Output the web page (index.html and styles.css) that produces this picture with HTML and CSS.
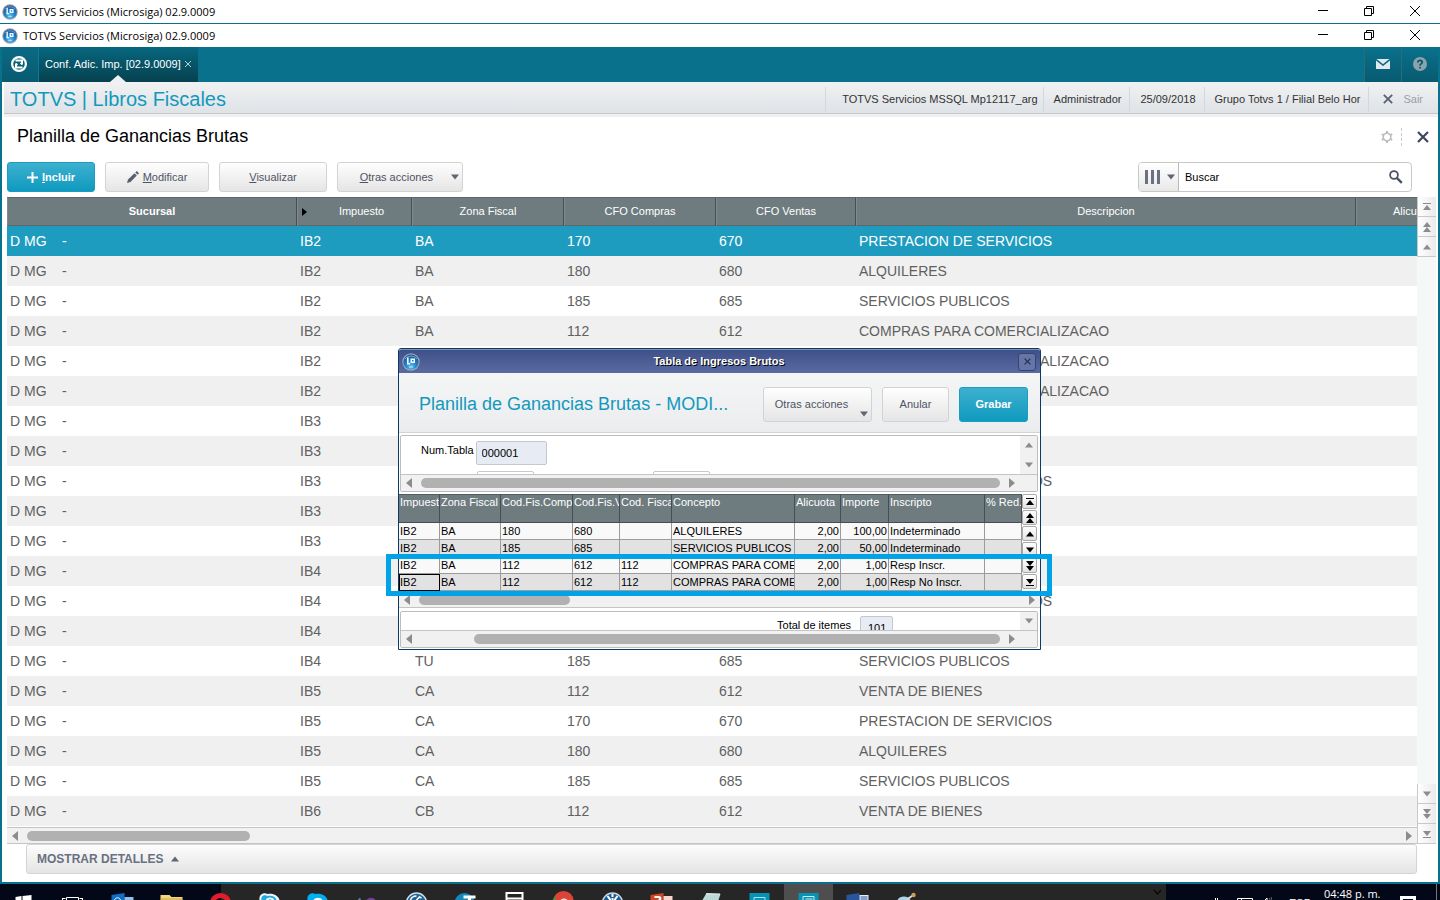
FILE: index.html
```html
<!DOCTYPE html>
<html lang="es">
<head>
<meta charset="utf-8">
<title>TOTVS Servicios (Microsiga) 02.9.0009</title>
<link rel="stylesheet" href="styles.css">
</head>
<body>
<svg class="defs" width="0" height="0" aria-hidden="true">
  <defs>
    <radialGradient id="ball" cx="50%" cy="80%" r="80%"><stop offset="0" stop-color="#5cc8f5"/><stop offset=".45" stop-color="#2380c8"/><stop offset="1" stop-color="#1a4f94"/></radialGradient>
    <symbol id="logo" viewBox="0 0 18 18"><circle cx="9" cy="9" r="8.700" fill="#9aa7b0"/><circle cx="9" cy="9" r="7.600" fill="url(#ball)"/><path d="M3 6a7 6 0 0 1 12 0" fill="none" stroke="#a9d3ee" stroke-width="1" opacity=".6"/><path d="M5 4.500h1.600V10H8v1.500H5zM8.500 5.500h4.500V10H8.500zM10 7v1.500h1.500V7z" fill="#f2faff" fill-rule="evenodd"/><path d="M7 14h4" stroke="#bdeafc"/></symbol>
    <symbol id="wmin" viewBox="0 0 12 12"><path d="M1 5.500h10" stroke="#000" fill="none"/></symbol>
    <symbol id="wmax" viewBox="0 0 12 12"><path d="M1.500 3.500h7v7h-7zM3.500 3.500v-2h7v7h-2" stroke="#000" fill="none"/></symbol>
    <symbol id="wx" viewBox="0 0 12 12"><path d="M1 1l10 10M11 1L1 11" stroke="#000" fill="none"/></symbol>
    <symbol id="up" viewBox="0 0 12 12"><path d="M6 3.500l4 5H2z"/></symbol>
    <symbol id="down" viewBox="0 0 12 12"><path d="M6 8.500l4-5H2z"/></symbol>
    <symbol id="left" viewBox="0 0 12 12"><path d="M3 6l6-5v10z"/></symbol>
    <symbol id="right" viewBox="0 0 12 12"><path d="M9 6L3 1v10z"/></symbol>
    <symbol id="first" viewBox="0 0 12 12"><path d="M2 2h8v1H2zM6 4l4 5H2z"/></symbol>
    <symbol id="last" viewBox="0 0 12 12"><path d="M2 9h8v1H2zM6 8l4-5H2z"/></symbol>
    <symbol id="up2" viewBox="0 0 12 12"><path d="M6 1l4 5H2zM6 6l4 5H2z"/></symbol>
    <symbol id="down2" viewBox="0 0 12 12"><path d="M6 6l4-5H2zM6 11l4-5H2z"/></symbol>
    <symbol id="cross" viewBox="0 0 12 12"><path d="M1 1l10 10M11 1L1 11" fill="none" stroke="currentColor" stroke-width="2.200"/></symbol>
  </defs>
</svg>

<header class="titlebar">
  <svg class="i16"><use href="#logo"/></svg><span class="titlebar-text">TOTVS Servicios (Microsiga) 02.9.0009</span>
  <button aria-label="Minimizar"><svg class="i12"><use href="#wmin"/></svg></button><button aria-label="Restaurar"><svg class="i12"><use href="#wmax"/></svg></button><button aria-label="Cerrar"><svg class="i12"><use href="#wx"/></svg></button>
</header>
<header class="titlebar">
  <svg class="i16"><use href="#logo"/></svg><span class="titlebar-text">TOTVS Servicios (Microsiga) 02.9.0009</span>
  <button aria-label="Minimizar"><svg class="i12"><use href="#wmin"/></svg></button><button aria-label="Restaurar"><svg class="i12"><use href="#wmax"/></svg></button><button aria-label="Cerrar"><svg class="i12"><use href="#wx"/></svg></button>
</header>

<main class="frame">
  <nav class="tabs">
    <button class="home" aria-label="Inicio"><svg width="16" height="16" viewBox="0 0 16 16"><circle cx="8" cy="8" r="6.900" fill="none" stroke="#fff" stroke-width="2.200"/><path d="M4.500 4.500h6.500v4M11.500 11.500H5v-4" fill="none" stroke="#fff" stroke-width="2"/><path d="M5 7.500l1.500 1.500M11 8.500L9.500 7" stroke="#fff" stroke-width="1.500"/></svg></button>
    <div class="tab"><span>Conf. Adic. Imp. [02.9.0009]</span><button aria-label="Cerrar pestaña"><svg width="6" height="6" viewBox="0 0 6 6"><path d="M0 0l6 6M6 0L0 6" stroke="#b9d3da" fill="none"/></svg></button></div>
    <div class="grow"></div>
    <button class="tool" aria-label="Mensajes"><svg width="14" height="10" viewBox="0 0 14 10"><path d="M0 0h14v10H0z" fill="#dfe9ee"/><path d="M0 .5l7 5.500 7-5.500" fill="none" stroke="#0a6680" stroke-width="1.500"/></svg></button>
    <button class="tool" aria-label="Ayuda"><svg width="14" height="14" viewBox="0 0 14 14"><circle cx="7" cy="7" r="7" fill="#8ba3ad"/><path d="M4.800 5.500c0-3 4.400-2.700 4.400-.2C9.200 7 7 6.700 7 8.500M7 9.700v1.800" fill="none" stroke="#0a5468" stroke-width="1.700"/></svg></button>
  </nav>
  <div class="appbar">
    <h1>TOTVS | Libros Fiscales</h1>
    <span class="info">TOTVS Servicios MSSQL Mp12117_arg</span><span class="info">Administrador</span><span class="info">25/09/2018</span><span class="info">Grupo Totvs 1 / Filial Belo Hor</span>
    <button class="exit"><svg width="10" height="10"><use href="#cross"/></svg>Sair</button>
  </div>
  <section class="heading">
    <h2>Planilla de Ganancias Brutas</h2>
    <button aria-label="Configurar" class="gear"><svg width="14" height="14" viewBox="0 0 14 14"><circle cx="7" cy="7" r="3.800" fill="none" stroke="#bdbdbd" stroke-width="1.600"/><path d="M7 1v2.500M7 10.500V13M1.800 4l2.200 1.300M10 8.700l2.200 1.300M1.800 10L4 8.700M10 5.300L12.200 4" stroke="#bdbdbd" stroke-width="2"/></svg></button>
    <button aria-label="Cerrar" class="close"><svg class="i12"><use href="#cross"/></svg></button>
  </section>
  <section class="actions">
    <button class="btn primary add"><svg width="11" height="11" viewBox="0 0 11 11"><path d="M5.500 0v11M0 5.500h11" stroke="#fff" stroke-width="2"/></svg><span><u>I</u>ncluir</span></button>
    <button class="btn edit"><svg width="12" height="12" viewBox="0 0 12 12"><path d="M0 12l1-3.500 6.500-6.300 2.300 2.300L3.500 11zM8.300 1.500L9.700 0 12 2.200l-1.400 1.500z" fill="#5a5e6b"/></svg><span><u>M</u>odificar</span></button>
    <button class="btn view"><span><u>V</u>isualizar</span></button>
    <button class="btn more"><span><u>O</u>tras acciones</span><svg class="i12"><use href="#down"/></svg></button>
    <div class="grow"></div>
    <div class="search">
      <button class="cols" aria-label="Columnas"><svg width="16" height="14" viewBox="0 0 16 14"><path d="M0 0h3v14H0zM6 0h3v14H6zM12 0h3v14h-3z" fill="#6b7083"/></svg><svg class="i12"><use href="#down"/></svg></button>
      <input type="text" value="Buscar" aria-label="Buscar">
      <button class="lens" aria-label="Ejecutar búsqueda"><svg width="14" height="14" viewBox="0 0 14 14"><circle cx="5" cy="5" r="3.900" fill="none" stroke="#4b5266" stroke-width="1.800"/><path d="M7.800 7.800l5 5" stroke="#4b5266" stroke-width="2.400"/></svg></button>
    </div>
  </section>
  <section class="browse">
    <div class="browse-main">
      <table class="list">
        <colgroup><col class="c-suc"><col class="c-imp"><col class="c-cfo"><col class="c-cfo"><col class="c-vta"><col><col class="c-ali"></colgroup>
        <thead><tr><th class="key">Sucursal</th><th class="mark">Impuesto</th><th>Zona Fiscal</th><th>CFO Compras</th><th>CFO Ventas</th><th>Descripcion</th><th class="cut">Alicu</th></tr></thead>
        <tbody>
          <tr class="selected"><td><span class="co">D MG</span>-</td><td>IB2</td><td>BA</td><td>170</td><td>670</td><td>PRESTACION DE SERVICIOS</td><td></td></tr>
          <tr><td><span class="co">D MG</span>-</td><td>IB2</td><td>BA</td><td>180</td><td>680</td><td>ALQUILERES</td><td></td></tr>
          <tr><td><span class="co">D MG</span>-</td><td>IB2</td><td>BA</td><td>185</td><td>685</td><td>SERVICIOS PUBLICOS</td><td></td></tr>
          <tr><td><span class="co">D MG</span>-</td><td>IB2</td><td>BA</td><td>112</td><td>612</td><td>COMPRAS PARA COMERCIALIZACAO</td><td></td></tr>
          <tr><td><span class="co">D MG</span>-</td><td>IB2</td><td></td><td></td><td></td><td>COMPRAS PARA COMERCIALIZACAO</td><td></td></tr>
          <tr><td><span class="co">D MG</span>-</td><td>IB2</td><td></td><td></td><td></td><td>COMPRAS PARA COMERCIALIZACAO</td><td></td></tr>
          <tr><td><span class="co">D MG</span>-</td><td>IB3</td><td></td><td></td><td></td><td></td><td></td></tr>
          <tr><td><span class="co">D MG</span>-</td><td>IB3</td><td></td><td></td><td></td><td></td><td></td></tr>
          <tr><td><span class="co">D MG</span>-</td><td>IB3</td><td></td><td></td><td></td><td>PRESTACION DE SERVICIOS</td><td></td></tr>
          <tr><td><span class="co">D MG</span>-</td><td>IB3</td><td></td><td></td><td></td><td></td><td></td></tr>
          <tr><td><span class="co">D MG</span>-</td><td>IB3</td><td></td><td></td><td></td><td></td><td></td></tr>
          <tr><td><span class="co">D MG</span>-</td><td>IB4</td><td></td><td></td><td></td><td></td><td></td></tr>
          <tr><td><span class="co">D MG</span>-</td><td>IB4</td><td></td><td></td><td></td><td>PRESTACION DE SERVICIOS</td><td></td></tr>
          <tr><td><span class="co">D MG</span>-</td><td>IB4</td><td></td><td></td><td></td><td></td><td></td></tr>
          <tr><td><span class="co">D MG</span>-</td><td>IB4</td><td>TU</td><td>185</td><td>685</td><td>SERVICIOS PUBLICOS</td><td></td></tr>
          <tr><td><span class="co">D MG</span>-</td><td>IB5</td><td>CA</td><td>112</td><td>612</td><td>VENTA DE BIENES</td><td></td></tr>
          <tr><td><span class="co">D MG</span>-</td><td>IB5</td><td>CA</td><td>170</td><td>670</td><td>PRESTACION DE SERVICIOS</td><td></td></tr>
          <tr><td><span class="co">D MG</span>-</td><td>IB5</td><td>CA</td><td>180</td><td>680</td><td>ALQUILERES</td><td></td></tr>
          <tr><td><span class="co">D MG</span>-</td><td>IB5</td><td>CA</td><td>185</td><td>685</td><td>SERVICIOS PUBLICOS</td><td></td></tr>
          <tr><td><span class="co">D MG</span>-</td><td>IB6</td><td>CB</td><td>112</td><td>612</td><td>VENTA DE BIENES</td><td></td></tr>
        </tbody>
      </table>
      <div class="hscroll main-scroll"><svg class="i12"><use href="#left"/></svg><div class="track"><div class="thumb thumb-main"></div></div><svg class="i12"><use href="#right"/></svg></div>
      <button class="details">MOSTRAR DETALLES<svg class="i12"><use href="#up"/></svg></button>
    </div>
    <div class="rail">
      <button aria-label="Primero"><svg class="i12"><use href="#first"/></svg></button><button aria-label="Página anterior"><svg class="i12"><use href="#up2"/></svg></button><button aria-label="Anterior"><svg class="i12"><use href="#up"/></svg></button>
      <div class="grow"></div>
      <button aria-label="Siguiente"><svg class="i12"><use href="#down"/></svg></button><button aria-label="Página siguiente"><svg class="i12"><use href="#down2"/></svg></button><button aria-label="Último"><svg class="i12"><use href="#last"/></svg></button>
    </div>
  </section>
</main>

<section class="dialog" role="dialog" aria-labelledby="dlg-title">
  <div class="dlg-bar"><svg width="18" height="18"><use href="#logo"/></svg><strong id="dlg-title">Tabla de Ingresos Brutos</strong><button aria-label="Cerrar"><svg width="7" height="7"><use href="#cross"/></svg></button></div>
  <div class="dlg-head">
    <h3>Planilla de Ganancias Brutas - MODI...</h3>
    <button class="btn dlg-more">Otras acciones<svg class="i12"><use href="#down"/></svg></button>
    <button class="btn dlg-cancel">Anular</button>
    <button class="btn primary dlg-save">Grabar</button>
  </div>
  <div class="panel">
    <div class="panel-row">
      <div class="form">
        <div class="field"><label for="num">Num.Tabla</label><input id="num" type="text" value="000001"></div>
        <div class="peek"><input type="text" aria-label="Desde"><input type="text" aria-label="Hasta"></div>
      </div>
      <div class="vscroll"><svg class="i12"><use href="#up"/></svg><svg class="i12"><use href="#down"/></svg></div>
    </div>
    <div class="hscroll"><svg class="i12"><use href="#left"/></svg><div class="track"><div class="thumb"></div></div><svg class="i12"><use href="#right"/></svg></div>
  </div>
  <div class="grid">
    <table class="items">
      <colgroup><col class="g1"><col class="g2"><col class="g3"><col class="g4"><col class="g5"><col><col class="g7"><col class="g8"><col class="g9"><col class="g10"></colgroup>
      <thead><tr><th>Impuesto</th><th>Zona Fiscal</th><th>Cod.Fis.Comp</th><th>Cod.Fis.V</th><th>Cod. Fisca</th><th>Concepto</th><th>Alicuota</th><th>Importe</th><th>Inscripto</th><th>% Red.</th></tr></thead>
      <tbody>
        <tr><td>IB2</td><td>BA</td><td>180</td><td>680</td><td></td><td>ALQUILERES</td><td class="num">2,00</td><td class="num">100,00</td><td>Indeterminado</td><td></td></tr>
        <tr><td>IB2</td><td>BA</td><td>185</td><td>685</td><td></td><td>SERVICIOS PUBLICOS</td><td class="num">2,00</td><td class="num">50,00</td><td>Indeterminado</td><td></td></tr>
        <tr><td>IB2</td><td>BA</td><td>112</td><td>612</td><td>112</td><td>COMPRAS PARA COMER</td><td class="num">2,00</td><td class="num">1,00</td><td>Resp Inscr.</td><td></td></tr>
        <tr><td class="focus">IB2</td><td>BA</td><td>112</td><td>612</td><td>112</td><td>COMPRAS PARA COMER</td><td class="num">2,00</td><td class="num">1,00</td><td>Resp No Inscr.</td><td></td></tr>
      </tbody>
    </table>
    <div class="grid-rail">
      <button aria-label="Primero"><svg class="i12"><use href="#first"/></svg></button><button aria-label="Página anterior"><svg class="i12"><use href="#up2"/></svg></button><button aria-label="Anterior"><svg class="i12"><use href="#up"/></svg></button><button aria-label="Siguiente"><svg class="i12"><use href="#down"/></svg></button><button aria-label="Página siguiente"><svg class="i12"><use href="#down2"/></svg></button><button aria-label="Último"><svg class="i12"><use href="#last"/></svg></button>
    </div>
  </div>
  <div class="hscroll grid-scroll"><svg class="i12"><use href="#left"/></svg><div class="track"><div class="thumb thumb-grid"></div></div><svg class="i12"><use href="#right"/></svg></div>
  <div class="panel foot">
    <div class="panel-row">
      <div class="total"><label for="tot">Total de itemes</label><input id="tot" type="text" value="101"></div>
      <div class="vscroll"><svg class="i12"><use href="#down"/></svg></div>
    </div>
    <div class="hscroll"><svg class="i12"><use href="#left"/></svg><div class="track"><div class="thumb thumb-foot"></div></div><svg class="i12"><use href="#right"/></svg></div>
  </div>
  <div class="highlight"></div>
</section>

<footer class="taskbar">
  <div class="apps">
    <svg viewBox="0 0 24 16"><path d="M3 13l6-1v4H3zM10 12l9-1v5h-9z" fill="#fff"/></svg>
    <svg viewBox="0 0 24 16"><path d="M5 13.500h12V16M5 13.500V16M1 14.500h3M1 14v2M18 14.500h3M21 14v2" fill="none" stroke="#fff"/></svg>
    <svg viewBox="0 0 24 16"><path d="M1 11l13-2v7H1z" fill="#0f6fc5"/><path d="M14 13h9v3h-9z" fill="#8fc0ee"/><path d="M4 16c1-3 5-3 6 0" fill="none" stroke="#fff"/></svg>
    <svg viewBox="0 0 24 16"><path d="M1 11h9l2 2h11v3H1z" fill="#f3d77b"/><path d="M1 15h22" stroke="#d2a53d"/></svg>
    <svg viewBox="0 0 24 16"><ellipse cx="12" cy="19" rx="8" ry="7.500" fill="none" stroke="#e21b2d" stroke-width="5"/></svg>
    <svg viewBox="0 0 24 16"><path d="M2 16c-1-5 4-8 8-6 6-1 11 2 12 6z" fill="#e9f7fd"/><path d="M4 16c-1-4 3-6 6-4 5-1 8 1 9 4z" fill="#24a9df"/><path d="M9 16c2-2 5-2 7 0" fill="none" stroke="#fff" stroke-width="2"/></svg>
    <svg viewBox="0 0 24 16"><path d="M1 16c-1-5 4-8 8-6 6-1 11 2 12 6z" fill="#00aff0"/><path d="M7 16c2-3 7-3 9 0z" fill="#fff"/></svg>
    <svg viewBox="0 0 24 16"><path d="M3 16l2-1.500" fill="none" stroke="#6b7894" stroke-width="2"/><path d="M11 16c2-3 7-3 9 0z" fill="#7140a0"/></svg>
    <svg viewBox="0 0 24 16"><circle cx="12" cy="19" r="10" fill="#1d6398" stroke="#d3dce2" stroke-width="1.500"/><path d="M6 16c1-3 4-4 6-4M12 16l3-3 2 1" stroke="#fff" stroke-width="1.500" fill="none"/></svg>
    <svg viewBox="0 0 24 16"><circle cx="11" cy="19" r="10" fill="#1687b9"/><path d="M10 13h12M16 13v3" stroke="#fff" stroke-width="3" fill="none"/></svg>
    <svg viewBox="0 0 24 16"><path d="M4 16V9h16v7M4 14.500h16" fill="none" stroke="#fff" stroke-width="2"/></svg>
    <svg viewBox="0 0 24 16"><path d="M2 16a10 9 0 0 1 20 0z" fill="#dc4438"/><path d="M1 16l2-3 2 3z" fill="#3b9b4a"/><path d="M9 16c2-2 5-2 7 0z" fill="#efe6d8"/></svg>
    <svg viewBox="0 0 24 16"><circle cx="12" cy="19" r="10" fill="#155f9d" stroke="#ced4d8" stroke-width="1.500"/><path d="M12 10v3M12 14v2M7 12l3 4M17 12l-3 4" stroke="#fff" stroke-width="2"/></svg>
    <svg viewBox="0 0 24 16"><path d="M1 11l13-2v7H1z" fill="#d24625"/><path d="M14 12h9v4h-9z" fill="#f6d7ce"/><path d="M5 13h4c3 0 2 3 0 3" fill="none" stroke="#fff" stroke-width="2"/></svg>
    <svg viewBox="0 0 24 16"><path d="M8 9l14 1-2 6H4z" fill="#bcd9d8"/><path d="M8 10h13" stroke="#eee" stroke-width="2" stroke-dasharray="1 1"/></svg>
    <svg viewBox="0 0 24 16"><path d="M2 9h20v7H2z" fill="#0793b5"/><path d="M6.500 16v-2.500h11V16" fill="none" stroke="#a9e5ef"/></svg>
    <span class="active"><svg viewBox="0 0 24 16"><path d="M2 9h20v7H2z" fill="#0793b5"/><path d="M6.500 16v-3.500h11V16M9 15h7" fill="none" stroke="#c9f1f5"/></svg></span>
    <svg viewBox="0 0 24 16"><path d="M1 11l13-2v7H1z" fill="#29559e"/><path d="M14 11h9v5h-9z" fill="#e8eefb"/><path d="M15 13h7M15 15h7" stroke="#29559e"/></svg>
    <svg viewBox="0 0 24 16"><path d="M3 16c3-5 11-4 13 0z" fill="#aed5e7"/><path d="M13 15l6-4" stroke="#ddd" stroke-width="2"/><circle cx="19" cy="11" r="2.200" fill="#cf9c61"/></svg>
  </div>
  <div class="middle"><svg width="9" height="6" viewBox="0 0 9 6"><path d="M1 1l3.500 4L8 1" fill="none" stroke="#0b0b0b" stroke-width="1.500"/></svg></div>
  <div class="tray">
    <svg width="60" height="16" viewBox="0 0 60 16"><path d="M3.500 16v-2M5.500 16v-2M25.500 16v-1.500h15V16M29.500 16v-1M53 16l2-2v2" fill="none" stroke="#fff"/><path d="M57 14l1 2M59 13l1 3" stroke="#667"/></svg>
    <span class="lang">ESP</span><span class="clock">04:48 p. m.</span>
    <svg width="16" height="16" viewBox="0 0 16 16"><path d="M1.500 16v-2.500h13V16" fill="none" stroke="#fff" stroke-width="3"/></svg>
    <i class="peek-line"></i>
  </div>
</footer>
</body>
</html>
```
FILE: styles.css
```css
* { box-sizing: border-box; }
body {
  margin: 0;
  min-height: 100vh;
  display: flex;
  flex-direction: column;
  position: relative;
  overflow: hidden;
  background: #fff;
  color: #000;
  font: 11px/14px "Liberation Sans", Arial, sans-serif;
}
button, input { font: inherit; color: inherit; }
button { display: flex; align-items: center; justify-content: center; padding: 0; border: 0; background: none; }
h1, h2, h3 { margin: 0; font-weight: normal; }
svg { display: block; flex: none; }
.defs { position: absolute; }
.grow { flex: 1; }
.i12 { width: 12px; height: 12px; }
.i16 { width: 16px; height: 16px; }

.titlebar { display: flex; align-items: center; height: 23px; padding: 0 2px; background: #fff; }
.titlebar + .titlebar { height: 24px; border-top: 1px solid #0a708c; }
.titlebar-text { flex: 1; padding-left: 5px; font: 12px/16px "Open Sans", "Noto Sans", sans-serif; font-size: 11px; }
.titlebar button { width: 46px; height: 22px; padding-bottom: 2px; }

.frame { flex: 1; display: flex; flex-direction: column; border: solid #0a718d; border-width: 0 2px 2px; }
.tabs { display: flex; height: 35px; background: #0a718d; color: #fff; }
.home { width: 36px; padding: 0 2px 2px 0; background: linear-gradient(#0a6a84, #085b70); }
.tab {
  position: relative;
  display: flex;
  align-items: center;
  width: 160px;
  padding: 0 0 2px 6px;
  gap: 4px;
  border-left: 1px solid #0b7b98;
  background: linear-gradient(#07677f, #06414f);
}
.tab::after {
  content: "";
  position: absolute;
  left: 71px;
  bottom: 0;
  border: solid transparent;
  border-width: 0 8px 7px;
  border-bottom-color: #eef0f2;
}
.tool { width: 37px; padding-bottom: 2px; border-left: 1px solid #2b6c79; background: linear-gradient(#0a718d, #085a70); }
.appbar {
  display: flex;
  align-items: center;
  height: 35px;
  margin-left: 2px;
  padding: 0 0 1px 6px;
  background: linear-gradient(#f0f1f2, #dfe3e7 31px, #c3c8cc 31px, #c3c8cc 32px, #f0f0f0 32px);
}
.appbar h1 { flex: 1; color: #1399bd; font-size: 20px; line-height: 24px; }
.info, .exit { height: 25px; line-height: 25px; padding: 0 8px 0 10px; border-left: 1px solid #d5d8da; color: #333; }
.info:first-of-type { padding: 0 5px 0 16px; }
.exit { gap: 10px; padding: 0 15px 0 14px; color: #999ea5; }
.exit svg { color: #59606f; }
.heading { display: flex; align-items: center; height: 45px; padding: 0 9px 6px 15px; }
.heading h2 { flex: 1; padding-bottom: 2px; font-size: 18px; line-height: 22px; }
.gear { height: 18px; padding-right: 7px; border-right: 1px dashed #ccc; }
.close { padding-left: 15px; color: #3d475c; }

.actions { display: flex; gap: 10px; height: 35px; padding: 0 26px 5px 5px; }
.btn {
  gap: 4px;
  border: 1px solid #d3d3d3;
  border-radius: 3px;
  background: linear-gradient(#fefefe, #e5e5e5);
  color: #4f5464;
}
.btn.primary { border-color: #1c9cbf; background: linear-gradient(#3db0cf, #0f9abf); color: #fff; font-weight: bold; }
.add { width: 88px; }
.edit { width: 104px; }
.view { width: 108px; }
.more { width: 126px; justify-content: flex-end; padding-right: 1px; gap: 16px; }
.more svg, .cols svg, .dlg-more svg, .details svg { fill: #5f6575; }
.search { display: flex; width: 274px; border: 1px solid #c8c8c8; border-radius: 4px; overflow: hidden; }
.search input { flex: 1; min-width: 0; border: 0; padding: 0 6px; background: #fff; }
.cols { width: 40px; gap: 4px; padding-left: 4px; border-right: 1px solid #bbb; background: linear-gradient(#fff, #e8e8e8); }
.lens { width: 30px; }

.browse { flex: 1; display: flex; padding-left: 5px; }
.browse-main { flex: 1; min-width: 0; }
.list { width: 100%; border-collapse: separate; border-spacing: 0; table-layout: fixed; }
.c-suc { width: 290px; }
.c-imp { width: 115px; }
.c-cfo { width: 152px; }
.c-vta { width: 140px; }
.c-ali { width: 61px; }
.list th {
  position: relative;
  height: 29px;
  padding: 0 0 2px;
  border-top: 1px solid #5d6668;
  border-right: 1px solid #474d50;
  border-bottom: 1px solid #5d6668;
  border-left: 1px solid #7f8b8e;
  background: #6e7c80;
  color: #fff;
  font-weight: normal;
}
.list .key { font-weight: bold; }
.list .mark { padding-left: 14px; }
.mark::before { content: ""; position: absolute; left: 4px; top: 10px; border: solid transparent; border-width: 4px 0 4px 5px; border-left-color: #000; }
.list .cut { border-right: 0; padding-left: 36px; text-align: left; }
.list td { height: 30px; padding: 0 3px; color: #606060; font-size: 14px; line-height: 18px; white-space: nowrap; }
.list tr:nth-child(even) td { background: #f0f0f0; }
.list .selected td { background: #1e9cbf; color: #fff; }
.co { display: inline-block; width: 52px; }

.hscroll { display: flex; align-items: center; height: 17px; padding: 0 3px; gap: 6px; border-top: 1px solid #c4c4c4; background: #f1f1f1; }
.hscroll > svg, .vscroll svg, .rail svg { fill: #8c8c8c; }
.track { flex: 1; }
.thumb { height: 10px; border-radius: 5px; background: #b1b1b1; }
.main-scroll { margin-top: 1px; padding: 0 2px; border-bottom: 1px solid #c4c4c4; }
.thumb-main { width: 223px; }
.details {
  width: calc(100% - 19px);
  height: 30px;
  margin-left: 19px;
  padding-left: 10px;
  justify-content: flex-start;
  gap: 6px;
  border: 1px solid #d4d4d4;
  border-radius: 3px;
  background: linear-gradient(#fdfdfd, #e4e4e4);
  color: #697080;
  font-size: 12px;
  font-weight: bold;
}
.rail { display: flex; flex-direction: column; width: 19px; height: 647px; margin-right: 2px; background: #f6f7f9; }
.rail button { height: 20px; border: 1px solid #c9c9c9; border-width: 0 0 1px 1px; background: linear-gradient(90deg, #fff, #e9eaec); }

.dialog {
  position: absolute;
  top: 348px;
  left: calc(50% - 322px);
  width: 643px;
  border: 1px solid #0b3a66;
  border-radius: 3px 3px 0 0;
  padding-bottom: 1px;
  background: #fff;
}
.dlg-bar { display: flex; align-items: center; height: 24px; padding: 0 4px 0 3px; border-top: 1px solid #8191b8; border-radius: 2px 2px 0 0; background: linear-gradient(#3f4f88, #5a6ba2); }
.dlg-bar strong { flex: 1; padding-bottom: 2px; text-align: center; color: #fff; text-shadow: 1px 1px 0 #000; }
.dlg-bar button { width: 18px; height: 18px; border: 1px solid #35436f; border-radius: 3px; background: #6575a8; color: #26304f; }
.dlg-head { display: flex; align-items: center; gap: 10px; height: 60px; padding: 3px 12px 0 20px; border-bottom: 1px solid #d2d4d6; background: linear-gradient(#f4f6f6, #eaecee); }
.dlg-head h3 { flex: 1; color: #1399bd; font-size: 18px; line-height: 22px; white-space: nowrap; }
.dlg-head .btn { height: 35px; }
.dlg-more { position: relative; width: 109px; padding-right: 12px; }
.dlg-more svg { position: absolute; right: 1px; bottom: 1px; }
.dlg-cancel { width: 67px; }
.dlg-save { width: 69px; }
.panel { margin: 2px 2px 2px 1px; border: 1px solid #bdbdbd; border-radius: 2px; overflow: hidden; }
.panel-row { display: flex; height: 38px; overflow: hidden; }
.form { flex: 1; padding: 5px 0 0 20px; }
.field { display: flex; gap: 2px; }
.field label { padding-top: 2px; }
.panel input { height: 24px; padding: 0 5px; border: 1px solid #c4c9cf; border-radius: 2px; background: #e7ebf4; }
.panel .field input { width: 71px; }
.peek { display: flex; gap: 119px; padding: 6px 0 0 56px; }
.panel .peek input { width: 57px; background: #fff; }
.vscroll { display: flex; flex-direction: column; align-items: center; justify-content: space-between; width: 17px; padding: 3px 0; background: #f1f1f1; }
.panel .hscroll { padding-right: 19px; padding-left: 2px; }
.grid { display: flex; padding-right: 3px; }
.items { flex: 1; width: 100%; min-width: 0; border-collapse: separate; border-spacing: 0; table-layout: fixed; }
.g1 { width: 41px; }
.g2 { width: 61px; }
.g3 { width: 72px; }
.g4 { width: 47px; }
.g5 { width: 52px; }
.g7 { width: 46px; }
.g8 { width: 48px; }
.g9 { width: 96px; }
.g10 { width: 37px; }
.items th { height: 29px; padding: 0 0 0 1px; border-top: 1px solid #535b5e; border-right: 1px solid #474d50; border-bottom: 1px solid #474d50; background: #6e7c80; color: #fff; font-weight: normal; text-align: left; vertical-align: top; white-space: nowrap; overflow: hidden; }
.items td { height: 17px; padding: 0 1px; border-right: 1px solid #9b9b9b; border-bottom: 1px solid #9b9b9b; background: #f9f9f9; line-height: 14px; white-space: nowrap; overflow: hidden; }
.items tr:nth-child(even) td { background: #e2e2e2; }
.items .num { text-align: right; }
.items .focus { outline: 1px solid #000; outline-offset: -1px; }
.grid-rail { display: flex; flex-direction: column; gap: 1px; width: 15px; }
.grid-rail button { height: 15px; border: 1px solid #aaa; border-radius: 2px; background: linear-gradient(#fff, #e2e2e2); }
.grid-scroll { height: 17px; padding: 2px 2px 0; border-top: 0; border-bottom: 1px solid #c4c4c4; }
.thumb-grid { width: 151px; }
.foot { margin: 3px 2px 0 1px; }
.foot .panel-row { height: 18px; }
.total { flex: 1; display: flex; justify-content: flex-end; gap: 9px; padding: 4px 127px 0 0; }
.total label { padding-top: 2px; }
.panel .total input { width: 33px; padding: 0 5px 0 7px; }
.thumb-foot { margin-left: 53px; }
.highlight { position: absolute; inset: 205px -12px 53px -13px; border: 5px solid #00a2e8; pointer-events: none; }

.taskbar { display: flex; height: 16px; overflow: hidden; background: #020818; color: #fff; }
.apps { display: flex; background: linear-gradient(90deg, #020818 221px, #262626 221px); }
.apps > * { width: 49px; height: 16px; }
.active { background: #4e4e4e; }
.active svg { width: 49px; height: 16px; }
.middle { flex: 1; display: flex; align-items: center; justify-content: flex-end; padding-right: 4px; background: #262626; }
.tray { display: flex; width: 274px; padding-left: 46px; }
.lang { padding: 12px 13px 0 17px; }
.tray .clock { flex: none; width: 76px; font: 11px/20px "Open Sans", "Noto Sans", sans-serif; }
.peek-line { width: 1px; margin-left: 20px; background: #777; }
```
